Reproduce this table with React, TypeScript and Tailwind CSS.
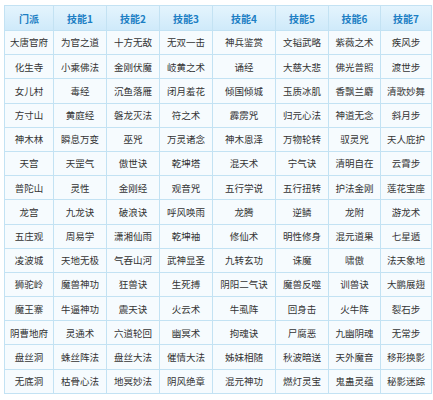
const headers = ["门派", "技能1", "技能2", "技能3", "技能4", "技能5", "技能6", "技能7"];

const rows: string[][] = [
  ["大唐官府", "为官之道", "十方无敌", "无双一击", "神兵鉴赏", "文韬武略", "紫薇之术", "疾风步"],
  ["化生寺", "小乘佛法", "金刚伏魔", "岐黄之术", "诵经", "大慈大悲", "佛光普照", "渡世步"],
  ["女儿村", "毒经", "沉鱼落雁", "闭月羞花", "倾国倾城", "玉质冰肌", "香飘兰麝", "清歌妙舞"],
  ["方寸山", "黄庭经", "磐龙灭法", "符之术", "霹雳咒", "归元心法", "神道无念", "斜月步"],
  ["神木林", "瞬息万变", "巫咒", "万灵诸念", "神木恩泽", "万物轮转", "驭灵咒", "天人庇护"],
  ["天宫", "天罡气", "傲世诀", "乾坤塔", "混天术", "宁气诀", "清明自在", "云霄步"],
  ["普陀山", "灵性", "金刚经", "观音咒", "五行学说", "五行扭转", "护法金刚", "莲花宝座"],
  ["龙宫", "九龙诀", "破浪诀", "呼风唤雨", "龙腾", "逆鳞", "龙附", "游龙术"],
  ["五庄观", "周易学", "潇湘仙雨", "乾坤袖", "修仙术", "明性修身", "混元道果", "七星遁"],
  ["凌波城", "天地无极", "气吞山河", "武神显圣", "九转玄功", "诛魔", "啸傲", "法天象地"],
  ["狮驼岭", "魔兽神功", "狂兽诀", "生死搏", "阴阳二气诀", "魔兽反噬", "训兽诀", "大鹏展翅"],
  ["魔王寨", "牛逼神功", "震天诀", "火云术", "牛虱阵", "回身击", "火牛阵", "裂石步"],
  ["阴曹地府", "灵通术", "六道轮回", "幽冥术", "拘魂诀", "尸腐恶", "九幽阴魂", "无常步"],
  ["盘丝洞", "蛛丝阵法", "盘丝大法", "催情大法", "姊妹相随", "秋波暗送", "天外魔音", "移形换影"],
  ["无底洞", "枯骨心法", "地冥妙法", "阴风绝章", "混元神功", "燃灯灵宝", "鬼蛊灵蕴", "秘影迷踪"],
];

const cols = "grid-cols-[49px_53px_53px_53px_63px_53px_52px_51px]";

export default function App() {
  return (
    <div className="w-[433px] h-[400px] bg-white pt-[5px] pl-[4px]" style={{ fontFamily: '"Noto Sans CJK SC", "Noto Sans", sans-serif' }}>
      <div className={`grid ${cols} w-[428px] border-l border-t border-[#c3e2f3]`}>
        {headers.map((h) => (
          <div
            key={h}
            className="h-[25px] flex items-center justify-center border-r border-b border-[#c3e2f3] bg-gradient-to-b from-[#e4f4fd] to-[#cfeafa] text-[#1d7fc4] text-[10px] font-bold"
          >
            {h}
          </div>
        ))}
        {rows.map((r, i) =>
          r.map((c, j) => (
            <div
              key={`${i}-${j}`}
              className="h-[24.2px] flex items-center justify-center border-r border-b border-[#c3e2f3] bg-[#f6fbfe] text-[#333] text-[9.5px] whitespace-nowrap overflow-hidden"
            >
              {c}
            </div>
          ))
        )}
      </div>
    </div>
  );
}
